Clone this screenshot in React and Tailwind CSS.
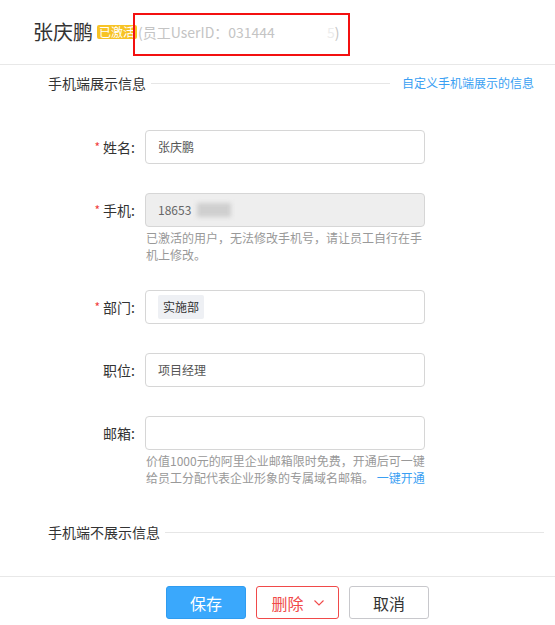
import React from "react";

const font = { fontFamily: '"Noto Sans CJK SC", "Liberation Sans", sans-serif' };

function Label({ required, children }) {
  return (
    <div className="w-[135px] flex justify-end items-center text-[14px] text-[#333] leading-[20px]">
      {required && <span className="text-[#f04040] text-[12px] mr-[3px] leading-none">*</span>}
      <span>{children}:</span>
    </div>
  );
}

function Row({ required, label, children, className = "" }) {
  return (
    <div className={"flex items-center " + className}>
      <Label required={required}>{label}</Label>
      <div className="ml-[10px]">{children}</div>
    </div>
  );
}

export default function App() {
  return (
    <div className="w-[555px] h-[625px] bg-white overflow-hidden" style={font}>
      {/* header */}
      <div className="relative h-[65px] border-b border-[#e8e8e8] flex items-center pl-[33px]">
        <span className="text-[20px] text-[#333] leading-[28px]">张庆鹏</span>
        <span className="ml-[4px] bg-[#f7c325] text-white text-[12px] leading-[14px] px-[2px] rounded-[2px]">已激活</span>
        <span className="ml-[1px] text-[14px] text-[#c4c4c4] leading-[20px] flex items-center">
          (员工UserID：031444
          <span className="inline-block w-[52px]"></span>
          <span className="text-[#ececec]">5</span>)
        </span>
        <div className="absolute left-[133px] top-[13px] w-[217px] h-[43px] border-2 border-[#f31010]"></div>
      </div>

      {/* section 1 title */}
      <div className="mt-[8px] flex items-center pl-[48px] pr-[21px] h-[20px]">
        <span className="text-[14px] text-[#333] leading-[20px]">手机端展示信息</span>
        <div className="flex-1 h-px bg-[#e6e6e6] ml-[5px] mr-[12px]"></div>
        <span className="text-[12px] text-[#3a9ff3] leading-[20px]">自定义手机端展示的信息</span>
      </div>

      {/* 姓名 */}
      <Row required label="姓名" className="mt-[37px]">
        <div className="w-[280px] h-[34px] border border-[#d6d6d6] rounded-[4px] flex items-center pl-[12px] text-[12px] text-[#555]">
          张庆鹏
        </div>
      </Row>

      {/* 手机 */}
      <Row required label="手机" className="mt-[29px]">
        <div className="w-[280px] h-[34px] border border-[#d6d6d6] bg-[#eeeeee] rounded-[4px] flex items-center pl-[12px] text-[12px] text-[#666]">
          18653
          <span className="inline-block ml-[6px] w-[34px] h-[14px] bg-[#cfcfcf] blur-[2px]"></span>
        </div>
      </Row>
      <div className="ml-[146px] mt-[2px] text-[12px] leading-[17px] text-[#999] whitespace-nowrap">
        已激活的用户，无法修改手机号，请让员工自行在手<br />机上修改。
      </div>

      {/* 部门 */}
      <Row required label="部门" className="mt-[27px]">
        <div className="w-[280px] h-[34px] border border-[#d6d6d6] rounded-[4px] flex items-center pl-[12px]">
          <span className="bg-[#eef0f4] rounded-[2px] h-[24px] px-[5px] flex items-center text-[12px] text-[#333]">实施部</span>
        </div>
      </Row>

      {/* 职位 */}
      <Row label="职位" className="mt-[29px]">
        <div className="w-[280px] h-[34px] border border-[#d6d6d6] rounded-[4px] flex items-center pl-[12px] text-[12px] text-[#555]">
          项目经理
        </div>
      </Row>

      {/* 邮箱 */}
      <Row label="邮箱" className="mt-[29px]">
        <div className="w-[280px] h-[34px] border border-[#d6d6d6] rounded-[4px]"></div>
      </Row>
      <div className="ml-[146px] mt-[2px] text-[12px] leading-[17px] text-[#999] whitespace-nowrap">
        价值1000元的阿里企业邮箱限时免费，开通后可一键<br />
        给员工分配代表企业形象的专属域名邮箱。 <span className="text-[#3a9ff3]">一键开通</span>
      </div>

      {/* section 2 title */}
      <div className="mt-[36px] flex items-center pl-[48px] pr-[11px] h-[20px]">
        <span className="text-[14px] text-[#333] leading-[20px]">手机端不展示信息</span>
        <div className="flex-1 h-px bg-[#e6e6e6] ml-[5px]"></div>
      </div>

      {/* footer */}
      <div className="mt-[34px] border-t border-[#e8e8e8] pt-[9px] pl-[166px] flex gap-[10px]">
        <button className="w-[80px] h-[33px] bg-[#3aa8fc] border border-[#2f9cf0] rounded-[3px] text-white text-[16px] leading-none flex items-center justify-center">
          保存
        </button>
        <button className="w-[83px] h-[33px] bg-white border border-[#f04a4a] rounded-[3px] text-[#f04a4a] text-[16px] leading-none flex items-center justify-center gap-[10px]">
          删除
          <svg width="10" height="6" viewBox="0 0 10 6" fill="none">
            <polyline points="0.5,0.5 5,5 9.5,0.5" stroke="#f04a4a" strokeWidth="1.1" />
          </svg>
        </button>
        <button className="w-[80px] h-[33px] bg-white border border-[#c8c8cc] rounded-[3px] text-[#333] text-[16px] leading-none flex items-center justify-center">
          取消
        </button>
      </div>
    </div>
  );
}
